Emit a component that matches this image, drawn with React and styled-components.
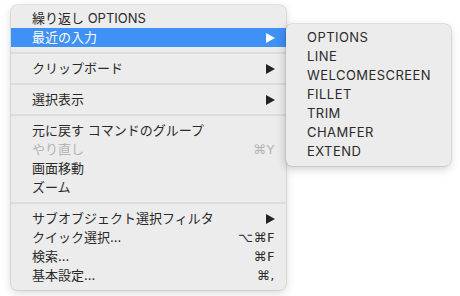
import React from "react";
import styled, { createGlobalStyle } from "styled-components";

const Global = createGlobalStyle`
  html, body { margin: 0; padding: 0; background: #ffffff; }
  body { font-family: Inter, "Noto Sans CJK JP", sans-serif; -webkit-font-smoothing: antialiased; }
`;

const Page = styled.div`
  padding: 5px 0 0 11px;
  width: 460px;
  height: 296px;
  box-sizing: border-box;
`;

const MenuPanel = styled.div`
  position: relative;
  width: ${(p) => p.$width}px;
  box-sizing: border-box;
  padding: 4px 0 5px;
  background: #ececec;
  border-radius: 6px;
  box-shadow: 0 0 0 0.5px rgba(0, 0, 0, 0.18), 0 3px 10px rgba(0, 0, 0, 0.16);
`;

const Row = styled.div`
  position: relative;
  display: flex;
  align-items: center;
  height: 19px;
  padding: 0 11px 0 21px;
  font-size: 13px;
  color: ${(p) => (p.$active ? "#ffffff" : p.$disabled ? "#b4b4b4" : "#2a2a2a")};
  background: ${(p) => (p.$active ? "#3f91f5" : "transparent")};
`;

const Label = styled.span`
  flex: 1;
  white-space: nowrap;
  line-height: 19px;
`;

const Shortcut = styled.span`
  font-family: "DejaVu Sans", "Noto Sans CJK JP", sans-serif;
  font-size: 13px;
  letter-spacing: 0.5px;
  color: inherit;
`;

const Separator = styled.div`
  height: 12px;
  display: flex;
  align-items: center;
  &::after {
    content: "";
    flex: 1;
    height: 2px;
    background: #dcdcdc;
  }
`;

const SubMenu = styled(MenuPanel)`
  position: absolute;
  left: 100%;
  top: -4px;
  z-index: 2;
  box-shadow: 0 0 0 0.5px rgba(0, 0, 0, 0.18), -1px 3px 10px rgba(0, 0, 0, 0.2);
`;

const SubRow = styled(Row)`
  padding: 0 12px 0 21px;
  color: #2a2a2a;
  letter-spacing: 0.45px;
`;

const Arrow = ({ color }) => (
  <svg width="9" height="10" viewBox="0 0 9 10" style={{ display: "block" }}>
    <polygon points="0,0 9,5 0,10" fill={color} />
  </svg>
);

const recent = ["OPTIONS", "LINE", "WELCOMESCREEN", "FILLET", "TRIM", "CHAMFER", "EXTEND"];

export default function App() {
  return (
    <>
      <Global />
      <Page>
        <MenuPanel $width={275}>
          <Row>
            <Label>繰り返し OPTIONS</Label>
          </Row>
          <Row $active>
            <Label>最近の入力</Label>
            <Arrow color="#ffffff" />
            <SubMenu $width={165}>
              {recent.map((r) => (
                <SubRow key={r}>
                  <Label>{r}</Label>
                </SubRow>
              ))}
            </SubMenu>
          </Row>
          <Separator />
          <Row>
            <Label>クリップボード</Label>
            <Arrow color="#222222" />
          </Row>
          <Separator />
          <Row>
            <Label>選択表示</Label>
            <Arrow color="#222222" />
          </Row>
          <Separator />
          <Row>
            <Label>元に戻す コマンドのグループ</Label>
          </Row>
          <Row $disabled>
            <Label>やり直し</Label>
            <Shortcut>⌘Y</Shortcut>
          </Row>
          <Row>
            <Label>画面移動</Label>
          </Row>
          <Row>
            <Label>ズーム</Label>
          </Row>
          <Separator />
          <Row>
            <Label>サブオブジェクト選択フィルタ</Label>
            <Arrow color="#222222" />
          </Row>
          <Row>
            <Label>クイック選択...</Label>
            <Shortcut>⌥⌘F</Shortcut>
          </Row>
          <Row>
            <Label>検索...</Label>
            <Shortcut>⌘F</Shortcut>
          </Row>
          <Row>
            <Label>基本設定...</Label>
            <Shortcut>⌘,</Shortcut>
          </Row>
        </MenuPanel>
      </Page>
    </>
  );
}
